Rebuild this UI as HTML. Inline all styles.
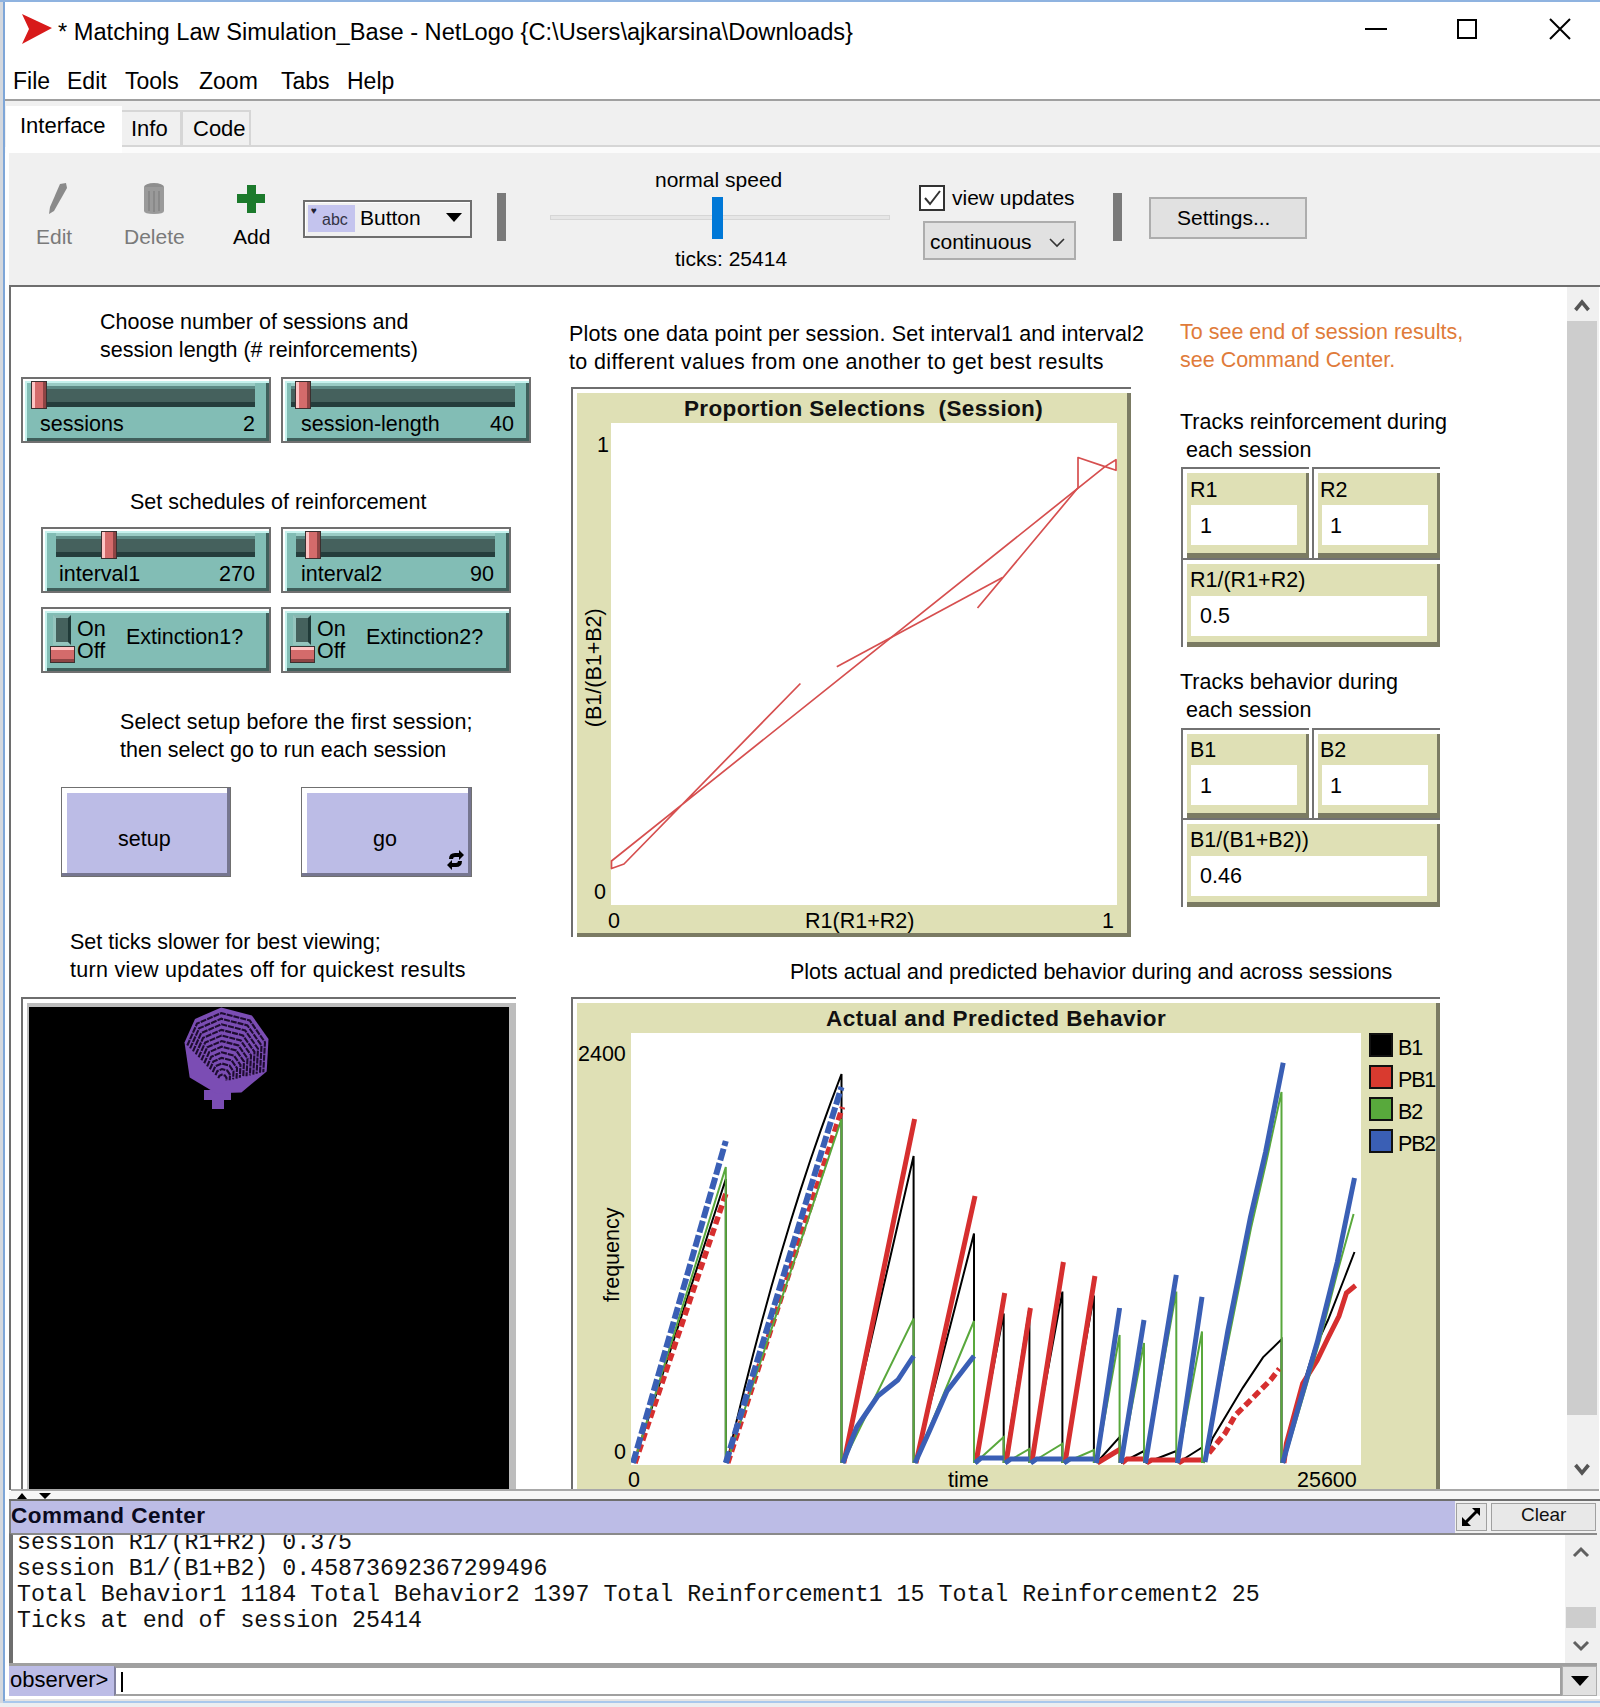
<!DOCTYPE html>
<html><head><meta charset="utf-8">
<style>
*{margin:0;padding:0;box-sizing:border-box}
html,body{width:1600px;height:1707px;overflow:hidden;background:#fff;font-family:"Liberation Sans",sans-serif;color:#000}
.a{position:absolute}
.t{position:absolute;white-space:pre;line-height:1}
.w{font-size:21.5px}
.fr{position:absolute;border:2px solid #707070;background:#82bdb5;box-shadow:inset 2px 2px 0 #fff,inset 4px 4px 0 #c6f2ee,inset -3px -3px 0 #3f5f5b}
.trk{position:absolute;height:24px;background:linear-gradient(to bottom,#9accc5 0,#9accc5 3px,#5c8984 3px,#5c8984 6px,#45615d 6px,#45615d 19px,#253d3c 19px)}
.thm{position:absolute;width:16px;height:28px;border:1.5px solid #3a3030;background:linear-gradient(to right,#ffc4c4 0,#ffc4c4 3px,#d46b6b 3px,#d46b6b 11px,#8e4444 11px)}
.btn{position:absolute;background:#bcbce6;border:1.5px solid #707070;box-shadow:inset -3px -3px 0 #767690,inset 5px 5px 0 #fff}
.sw{position:absolute;width:18px;height:30px;background:#45615d;border:3px solid #94c4bd;border-right-color:#203a38;border-top-color:#8ab8b2}
.pf{position:absolute;background:#fff;border-top:2px solid #6e6e6e;border-left:2px solid #6e6e6e}
.pb{position:absolute;background:#dfe0b5;border-right:4px solid #7b7b63;border-bottom:4px solid #7b7b63}
.mo{position:absolute;background:#fff;border-top:2px solid #727272;border-left:2px solid #727272}
.mb{position:absolute;background:#dfe0b5;border-right:3px solid #7b7b63;border-bottom:5px solid #7b7b63}
.mv{position:absolute;background:#fff}
.knob{position:absolute;width:25px;height:17px;border:1.5px solid #3a3030;background:linear-gradient(to bottom,#ffc4c4 0,#ffc4c4 3px,#d46b6b 3px,#d46b6b 12px,#8e4444 12px)}
</style></head><body>
<!-- desktop strip + window border -->
<div class="a" style="left:0;top:0;width:4px;height:1707px;background:#d4d8de"></div>
<div class="a" style="left:3px;top:0;width:2px;height:1707px;background:#7ea6d8"></div>
<div class="a" style="left:0;top:0;width:1600px;height:2px;background:#8fb3e0"></div>
<div class="a" style="left:5px;top:1701px;width:1595px;height:6px;background:#dfe3e8"></div>

<!-- title bar -->
<div id="title" class="a" style="left:5px;top:2px;width:1595px;height:56px;background:#fff"></div>
<svg class="a" style="left:20px;top:12px" width="36" height="34" viewBox="0 0 36 34"><path d="M2 2 L32 16 L2 32 L9 17 Z" fill="#d81a1a"/></svg>
<div class="t" style="left:58px;top:21px;font-size:23.65px">* Matching Law Simulation_Base - NetLogo {C:\Users\ajkarsina\Downloads}</div>
<div class="a" style="left:1365px;top:28px;width:22px;height:2px;background:#000"></div>
<div class="a" style="left:1457px;top:19px;width:20px;height:20px;border:2px solid #000"></div>
<svg class="a" style="left:1549px;top:18px" width="22" height="22"><path d="M1 1 L21 21 M21 1 L1 21" stroke="#000" stroke-width="2"/></svg>

<!-- menu bar -->
<div class="t" style="left:13px;top:70px;font-size:23px;word-spacing:0">File</div>
<div class="t" style="left:67px;top:70px;font-size:23px">Edit</div>
<div class="t" style="left:125px;top:70px;font-size:23px">Tools</div>
<div class="t" style="left:199px;top:70px;font-size:23px">Zoom</div>
<div class="t" style="left:281px;top:70px;font-size:23px">Tabs</div>
<div class="t" style="left:347px;top:70px;font-size:23px">Help</div>
<div class="a" style="left:5px;top:99px;width:1595px;height:2px;background:#a0a0a0"></div>

<!-- tabs row -->
<div class="a" style="left:5px;top:101px;width:1595px;height:52px;background:#f0f0f0"></div>
<div class="a" style="left:6px;top:106px;width:116px;height:47px;background:#fff;border:1px solid #dadada;border-bottom:none"></div>
<div class="a" style="left:122px;top:110px;width:60px;height:36px;background:#f0f0f0;border:2px solid #d6d6d6;border-left:none;border-bottom:none"></div>
<div class="a" style="left:181px;top:110px;width:70px;height:36px;background:#f0f0f0;border:2px solid #d6d6d6;border-bottom:none"></div>
<div class="a" style="left:6px;top:145px;width:1594px;height:2px;background:#d6d6d6"></div>
<div class="a" style="left:5px;top:147px;width:1595px;height:6px;background:#fbfbfb"></div>
<div class="a" style="left:6px;top:106px;width:116px;height:47px;background:#fff"></div>
<div class="t" style="left:20px;top:115px;font-size:22px">Interface</div>
<div class="t" style="left:131px;top:118px;font-size:22px">Info</div>
<div class="t" style="left:193px;top:118px;font-size:22px">Code</div>

<!-- toolbar -->
<div class="a" style="left:9px;top:153px;width:1591px;height:132px;background:#f0f0f0"></div>
<svg class="a" style="left:46px;top:181px" width="24" height="34" viewBox="0 0 24 34"><path d="M14 3 L20 2 L21 7 L8 30 L3 33 L4 26 Z" fill="#8a8a8a"/></svg>
<div class="t" style="left:36px;top:226px;font-size:21px;color:#7a7a7a">Edit</div>
<svg class="a" style="left:141px;top:181px" width="26" height="35" viewBox="0 0 26 35"><ellipse cx="13" cy="6" rx="10" ry="4" fill="#8e8e8e"/><path d="M3 6 L23 6 L23 30 Q23 33 13 33 Q3 33 3 30 Z" fill="#9a9a9a"/><path d="M8 10 V30 M13 10 V31 M18 10 V30" stroke="#848484" stroke-width="1.5"/></svg>
<div class="t" style="left:124px;top:226px;font-size:21px;color:#7a7a7a">Delete</div>
<div class="a" style="left:237px;top:194px;width:28px;height:9px;background:#1c7a2c"></div>
<div class="a" style="left:247px;top:185px;width:9px;height:28px;background:#1c7a2c"></div>
<div class="t" style="left:233px;top:226px;font-size:21px">Add</div>
<!-- widget dropdown -->
<div class="a" style="left:303px;top:200px;width:169px;height:38px;border:2px solid #6e6e6e;border-top-color:#6e6e6e;background:#f0f0f0;box-shadow:inset 1px 1px 0 #fff"></div>
<div class="a" style="left:308px;top:205px;width:47px;height:27px;background:#c4c4ee"></div>
<div class="t" style="left:311px;top:206px;font-size:10px;color:#223">&#9829;</div>
<div class="t" style="left:322px;top:212px;font-size:16px;color:#334">abc</div>
<div class="t" style="left:360px;top:207px;font-size:21px">Button</div>
<svg class="a" style="left:446px;top:213px" width="17" height="10"><path d="M0 0 H16 L8 9 Z" fill="#000"/></svg>
<div class="a" style="left:497px;top:193px;width:9px;height:48px;background:#7a7a7a"></div>
<!-- speed slider -->
<div class="t" style="left:655px;top:169px;font-size:21px">normal speed</div>
<div class="a" style="left:550px;top:215px;width:340px;height:5px;background:#e6e6e6;border:1px solid #d6d6d6"></div>
<div class="a" style="left:712px;top:197px;width:11px;height:42px;background:#0078d7"></div>
<div class="t" style="left:675px;top:248px;font-size:21px">ticks: 25414</div>
<!-- view updates -->
<div class="a" style="left:919px;top:185px;width:26px;height:26px;border:2px solid #333;background:#fff"></div>
<svg class="a" style="left:921px;top:187px" width="22" height="22"><path d="M4 11 L9 17 L19 4" stroke="#333" stroke-width="2" fill="none"/></svg>
<div class="t" style="left:952px;top:187px;font-size:21px">view updates</div>
<div class="a" style="left:923px;top:221px;width:153px;height:39px;background:#e1e1e1;border:2px solid #adadad"></div>
<div class="t" style="left:930px;top:231px;font-size:21px">continuous</div>
<svg class="a" style="left:1049px;top:238px" width="16" height="10"><path d="M1 1 L8 8 L15 1" stroke="#333" stroke-width="1.6" fill="none"/></svg>
<div class="a" style="left:1113px;top:193px;width:9px;height:48px;background:#7a7a7a"></div>
<div class="a" style="left:1149px;top:197px;width:158px;height:42px;background:#e1e1e1;border:2px solid #adadad"></div>
<div class="t" style="left:1177px;top:207px;font-size:21px">Settings...</div>

<!-- interface area -->
<div id="iface" class="a" style="left:9px;top:285px;width:1591px;height:1205px;background:#fff;border-top:2px solid #6e6e6e;border-left:2px solid #6e6e6e"></div>

<!-- LEFT COLUMN -->
<div class="t w" style="left:100px;top:312px">Choose number of sessions and</div>
<div class="t w" style="left:100px;top:340px">session length (# reinforcements)</div>
<div class="fr" style="left:21px;top:377px;width:250px;height:66px"></div>
<div class="trk" style="left:31px;top:383px;width:224px"></div>
<div class="thm" style="left:31px;top:381px"></div>
<div class="t w" style="left:40px;top:414px">sessions</div>
<div class="t w" style="left:243px;top:414px">2</div>
<div class="fr" style="left:281px;top:377px;width:250px;height:66px"></div>
<div class="trk" style="left:291px;top:383px;width:224px"></div>
<div class="thm" style="left:295px;top:381px"></div>
<div class="t w" style="left:301px;top:414px">session-length</div>
<div class="t w" style="left:490px;top:414px">40</div>

<div class="t w" style="left:130px;top:492px">Set schedules of reinforcement</div>
<div class="fr" style="left:41px;top:527px;width:230px;height:66px"></div>
<div class="trk" style="left:56px;top:533px;width:199px"></div>
<div class="thm" style="left:101px;top:531px"></div>
<div class="t w" style="left:59px;top:564px">interval1</div>
<div class="t w" style="left:219px;top:564px">270</div>
<div class="fr" style="left:281px;top:527px;width:230px;height:66px"></div>
<div class="trk" style="left:296px;top:533px;width:199px"></div>
<div class="thm" style="left:305px;top:531px"></div>
<div class="t w" style="left:301px;top:564px">interval2</div>
<div class="t w" style="left:470px;top:564px">90</div>

<div class="fr" style="left:41px;top:607px;width:230px;height:66px"></div>
<div class="sw" style="left:53px;top:615px"></div>
<div class="knob" style="left:50px;top:646px"></div>
<div class="t w" style="left:77px;top:619px">On</div>
<div class="t w" style="left:77px;top:641px">Off</div>
<div class="t w" style="left:126px;top:627px">Extinction1?</div>
<div class="fr" style="left:281px;top:607px;width:230px;height:66px"></div>
<div class="sw" style="left:293px;top:615px"></div>
<div class="knob" style="left:290px;top:646px"></div>
<div class="t w" style="left:317px;top:619px">On</div>
<div class="t w" style="left:317px;top:641px">Off</div>
<div class="t w" style="left:366px;top:627px">Extinction2?</div>

<div class="t w" style="left:120px;top:712px;letter-spacing:0.16px">Select setup before the first session;</div>
<div class="t w" style="left:120px;top:740px">then select go to run each session</div>
<div class="btn" style="left:61px;top:787px;width:170px;height:90px"></div>
<div class="t w" style="left:118px;top:829px">setup</div>
<div class="btn" style="left:301px;top:787px;width:171px;height:90px"></div>
<div class="t w" style="left:373px;top:829px">go</div>
<svg class="a" style="left:446px;top:850px" width="19" height="20" viewBox="0 0 19 20"><path d="M3 9 Q3 3 9 3 L13 3 L13 0 L18 5 L13 10 L13 7 L9 7 Q7 7 7 9 Z M16 11 Q16 17 10 17 L6 17 L6 20 L1 15 L6 10 L6 13 L10 13 Q12 13 12 11 Z" fill="#000"/></svg>

<div class="t w" style="left:70px;top:932px">Set ticks slower for best viewing;</div>
<div class="t w" style="left:70px;top:960px;letter-spacing:0.3px">turn view updates off for quickest results</div>
<!-- view -->
<div class="a" style="left:21px;top:997px;width:495px;height:493px;background:#fff;border-top:2px solid #6e6e6e;border-left:2px solid #6e6e6e"></div>
<div class="a" style="left:27px;top:1003px;width:489px;height:487px;background:#bdbdbd"></div>
<div class="a" style="left:29px;top:1007px;width:480px;height:483px;background:#000"></div>
<svg class="a" style="left:0;top:0" width="600" height="1200"><path d="M204 1090 L231 1090 L231 1100 L224 1100 L224 1109 L212 1109 L212 1100 L204 1100 Z" fill="#7b4db4"/><polygon points="221.2,1007.5 251.9,1015.4 268.5,1039.0 266.7,1071.4 241.4,1092.4 216.0,1093.3 189.7,1077.5 184.5,1042.5 195.0,1018.9" fill="#7b4db4"/><g fill="none" stroke="#1e0c30" stroke-width="2.1" stroke-dasharray="6 1"><polyline points="187.3,1045.5 197.0,1023.6 221.3,1013.1 249.7,1020.4 265.0,1042.2 263.3,1072.2"/><polyline points="190.1,1048.4 199.1,1028.4 221.3,1018.7 247.4,1025.4 261.5,1045.5 260.0,1073.0"/><polyline points="193.0,1051.4 201.1,1033.1 221.4,1024.3 245.2,1030.4 258.0,1048.7 256.6,1073.8"/><polyline points="195.8,1054.4 203.1,1037.9 221.4,1029.9 242.9,1035.4 254.5,1051.9 253.3,1074.6"/><polyline points="198.6,1057.3 205.2,1042.6 221.5,1035.5 240.7,1040.4 251.0,1055.2 249.9,1075.4"/><polyline points="201.4,1060.3 207.2,1047.4 221.6,1041.1 238.4,1045.4 247.5,1058.4 246.5,1076.2"/><polyline points="204.2,1063.3 209.2,1052.1 221.6,1046.7 236.2,1050.5 244.0,1061.6 243.2,1077.0"/><polyline points="207.1,1066.3 211.2,1056.9 221.7,1052.3 233.9,1055.5 240.5,1064.9 239.8,1077.8"/><polyline points="209.9,1069.2 213.3,1061.6 221.7,1057.9 231.7,1060.5 237.0,1068.1 236.5,1078.6"/><polyline points="212.7,1072.2 215.3,1066.3 221.8,1063.5 229.4,1065.5 233.5,1071.3 233.1,1079.4"/><polyline points="215.5,1075.2 217.3,1071.1 221.9,1069.1 227.2,1070.5 230.0,1074.6 229.7,1080.2"/><polyline points="218.3,1078.1 219.4,1075.8 221.9,1074.7 224.9,1075.5 226.5,1077.8 226.4,1081.0"/></g></svg>



<!-- PLOT 1 -->
<div class="t w" style="left:569px;top:324px;letter-spacing:0.14px">Plots one data point per session. Set interval1 and interval2</div>
<div class="t w" style="left:569px;top:352px;letter-spacing:0.36px">to different values from one another to get best results</div>
<div class="pf" style="left:571px;top:387px;width:560px;height:550px"></div>
<div class="pb" style="left:577px;top:393px;width:554px;height:544px"></div>
<div class="a" style="left:611px;top:423px;width:506px;height:482px;background:#fff"></div>
<div class="t" style="left:684px;top:398px;font-size:22.5px;font-weight:bold;color:#111;letter-spacing:0.36px">Proportion Selections  (Session)</div>
<div class="t w" style="left:597px;top:435px">1</div>
<div class="t w" style="left:594px;top:882px">0</div>
<div class="t w" style="left:608px;top:911px">0</div>
<div class="t w" style="left:805px;top:911px">R1(R1+R2)</div>
<div class="t w" style="left:1102px;top:911px">1</div>
<div class="t w" style="left:535px;top:657px;transform:rotate(-90deg)">(B1/(B1+B2)</div>
<svg class="a" style="left:0;top:0" width="1600" height="1000"><g fill="none" stroke="#d64f4f" stroke-width="1.7" stroke-linejoin="round">
<polyline points="800.4,683.5 624,864 611.5,868.5 611.5,861 1105,466.6 1116,459.7 1116,470.3 1105,466.6"/>
<polyline points="977.5,608 1078,487.8 1078,457.5 1105,466.6"/>
<polyline points="836.8,666.8 1002.5,577.5"/>
</g></svg>

<!-- RIGHT TEXTS + MONITORS -->
<div class="t w" style="left:1180px;top:322px;color:#e07b39">To see end of session results,</div>
<div class="t w" style="left:1180px;top:350px;color:#e07b39">see Command Center.</div>
<div class="t w" style="left:1180px;top:412px">Tracks reinforcement during</div>
<div class="t w" style="left:1180px;top:440px"> each session</div>
<div class="mo" style="left:1181px;top:467px;width:128px;height:91px"></div>
<div class="mb" style="left:1187px;top:473px;width:122px;height:85px"></div>
<div class="mv" style="left:1191px;top:505px;width:106px;height:40px"></div>
<div class="t w" style="left:1190px;top:480px">R1</div>
<div class="t w" style="left:1200px;top:516px">1</div>
<div class="mo" style="left:1312px;top:467px;width:128px;height:91px"></div>
<div class="mb" style="left:1318px;top:473px;width:122px;height:85px"></div>
<div class="mv" style="left:1322px;top:505px;width:106px;height:40px"></div>
<div class="t w" style="left:1320px;top:480px">R2</div>
<div class="t w" style="left:1330px;top:516px">1</div>
<div class="mo" style="left:1181px;top:558px;width:259px;height:89px"></div>
<div class="mb" style="left:1187px;top:564px;width:253px;height:83px"></div>
<div class="mv" style="left:1191px;top:596px;width:236px;height:40px"></div>
<div class="t w" style="left:1190px;top:570px">R1/(R1+R2)</div>
<div class="t w" style="left:1200px;top:606px">0.5</div>

<div class="t w" style="left:1180px;top:672px">Tracks behavior during</div>
<div class="t w" style="left:1180px;top:700px"> each session</div>
<div class="mo" style="left:1181px;top:728px;width:128px;height:90px"></div>
<div class="mb" style="left:1187px;top:734px;width:122px;height:84px"></div>
<div class="mv" style="left:1191px;top:765px;width:106px;height:40px"></div>
<div class="t w" style="left:1190px;top:740px">B1</div>
<div class="t w" style="left:1200px;top:776px">1</div>
<div class="mo" style="left:1312px;top:728px;width:128px;height:90px"></div>
<div class="mb" style="left:1318px;top:734px;width:122px;height:84px"></div>
<div class="mv" style="left:1322px;top:765px;width:106px;height:40px"></div>
<div class="t w" style="left:1320px;top:740px">B2</div>
<div class="t w" style="left:1330px;top:776px">1</div>
<div class="mo" style="left:1181px;top:818px;width:259px;height:89px"></div>
<div class="mb" style="left:1187px;top:824px;width:253px;height:83px"></div>
<div class="mv" style="left:1191px;top:856px;width:236px;height:40px"></div>
<div class="t w" style="left:1190px;top:830px">B1/(B1+B2))</div>
<div class="t w" style="left:1200px;top:866px">0.46</div>

<!-- PLOT 2 -->
<div class="t w" style="left:790px;top:962px">Plots actual and predicted behavior during and across sessions</div>
<div class="pf" style="left:571px;top:997px;width:869px;height:493px"></div>
<div class="pb" style="left:577px;top:1003px;width:863px;height:487px;border-bottom:none"></div>
<div class="a" style="left:631px;top:1033px;width:730px;height:432px;background:#fff"></div>
<div class="t" style="left:826px;top:1008px;font-size:22.5px;font-weight:bold;color:#111;letter-spacing:0.48px">Actual and Predicted Behavior</div>
<div class="t w" style="left:578px;top:1044px">2400</div>
<div class="t w" style="left:614px;top:1442px">0</div>
<div class="t w" style="left:628px;top:1470px">0</div>
<div class="t w" style="left:948px;top:1470px">time</div>
<div class="t w" style="left:1297px;top:1470px">25600</div>
<div class="t w" style="left:566px;top:1244px;transform:rotate(-90deg)">frequency</div>
<div class="a" style="left:1369px;top:1033px;width:24px;height:24px;background:#000;border:2px solid #111"></div>
<div class="a" style="left:1369px;top:1065px;width:24px;height:24px;background:#d93a2f;border:2px solid #111"></div>
<div class="a" style="left:1369px;top:1097px;width:24px;height:24px;background:#58a93c;border:2px solid #111"></div>
<div class="a" style="left:1369px;top:1129px;width:24px;height:24px;background:#3a5fb5;border:2px solid #111"></div>
<div class="t w" style="left:1398px;top:1038px;letter-spacing:-1.2px">B1</div>
<div class="t w" style="left:1398px;top:1070px;letter-spacing:-1.2px">PB1</div>
<div class="t w" style="left:1398px;top:1102px;letter-spacing:-1.2px">B2</div>
<div class="t w" style="left:1398px;top:1134px;letter-spacing:-1.2px">PB2</div>
<svg class="a" style="left:0;top:0" width="1600" height="1500"><defs><clipPath id="cp"><rect x="631" y="1033" width="730" height="432"/></clipPath></defs><g clip-path="url(#cp)" fill="none" stroke-linejoin="miter">
<path d="M634 1463 L725.8 1179 L725.8 1463 M726.8 1463 L735.4 1425.9 L744.2 1389.7 L753.2 1354.3 L762.3 1319.8 L771.6 1286.1 L781.1 1253.2 L790.7 1221.3 L800.5 1190.1 L810.5 1159.8 L820.7 1130.4 L831 1101.8 L841.5 1074 L841.5 1463 M842.8 1463 L913.6 1156 L913.6 1463 M915 1463 L974 1233.6 L974 1463 M975 1463 L1003.7 1313.5 L1003.7 1463 M1005 1463 L1029.4 1308 L1029.4 1463 M1030.7 1463 L1062.4 1291.6 L1062.4 1463 M1064 1463 L1093.9 1295.5 L1093.9 1463 M1096.4 1463 L1119.6 1437 L1119.6 1463 M1121 1463 L1144 1451 L1144 1463 M1145.5 1463 L1176.3 1451 L1176.3 1463 M1177.5 1463 L1202 1447.5 L1202 1463 M1203.4 1463 L1212.7 1438 L1227.8 1412.8 L1242.9 1387.6 L1263 1357.4 L1281.5 1339.3 L1281.5 1463 M1284 1463 L1290 1427 L1313.6 1351 L1328 1320 L1344.5 1278 L1354.5 1252" stroke="#000" stroke-width="2"/>
<path d="M843.8 1463 L914.6 1119 M916 1463 L975 1196 M976 1463 L1004.7 1293 M1006 1463 L1030.4 1308 M1031.7 1463 L1063.4 1262 M1065 1463 L1094.9 1276 M1097.4 1463 L1120.6 1449 M1122 1463 L1127 1459 L1144 1459 M1146.5 1463 L1151.5 1460 L1176.3 1460 M1178.5 1463 L1183.5 1460 L1202 1460 M1284 1463 L1286.4 1443.6 L1302.7 1383.6 L1317.3 1360 L1328 1338 L1339 1316 L1346.4 1293 L1355.5 1285.5" stroke="#d62f2f" stroke-width="5"/>
<path d="M635 1463 L726.8 1191 M727.8 1463 L842.5 1107 M1208.9 1453 L1225.3 1433 L1235.3 1415.3 L1248 1402.7 L1258 1392.6 L1270.6 1380 L1279.4 1368.7" stroke="#d62f2f" stroke-width="5.5" stroke-dasharray="8 4"/>
<path d="M634 1463 L725.8 1167 L725.8 1463 M726.8 1463 L841.5 1119 L841.5 1463 M842.8 1463 L913.6 1318.6 L913.6 1463 M915 1463 L974 1321 L974 1463 M975 1463 L1003.7 1437 L1003.7 1463 M1005 1463 L1029.4 1449 L1029.4 1463 M1030.7 1463 L1062.4 1443.7 L1062.4 1463 M1064 1463 L1093.9 1450 L1093.9 1463 M1096.4 1463 L1119.6 1335 L1119.6 1463 M1121 1463 L1144 1343 L1144 1463 M1145.5 1463 L1176.3 1291.6 L1176.3 1463 M1177.5 1463 L1202 1331.5 L1202 1463 M1203.4 1463 L1228.5 1340 L1251 1228 L1266 1163 L1281.5 1091.9 L1281.5 1463 M1283.6 1463 L1299 1411 L1320 1340 L1338 1270 L1353.6 1214" stroke="#59a83c" stroke-width="2"/>
<path d="M842.8 1463 L856.8 1427 L877.8 1396 L897.8 1380 L913.6 1356 M915 1463 L929 1432 L947 1391 L974 1356 M975 1463 L981 1458 L1003.7 1458 M1005 1463 L1011 1459 L1029.4 1459 M1030.7 1463 L1036.7 1459 L1062.4 1459 M1064 1463 L1070 1459 L1093.9 1459 M1096.4 1463 L1119.6 1308 M1121 1463 L1144 1320 M1145.5 1463 L1176.3 1274.8 M1177.5 1463 L1202 1296.8 M1205 1462 L1227.8 1331 L1250.5 1217 L1265.6 1152 L1283.2 1062.7 M1282.7 1463 L1297.3 1411 L1317.3 1342 L1337.3 1262 L1354.5 1178" stroke="#3a5fb5" stroke-width="5"/>
<path d="M633 1463 L725.8 1141 M725.8 1463 L841.5 1087" stroke="#3a5fb5" stroke-width="6" stroke-dasharray="12 3"/>
</g></svg>

<!-- interface bottom + splitter -->
<div class="a" style="left:11px;top:1489px;width:1588px;height:2px;background:#a8a8a8"></div>
<div class="a" style="left:9px;top:1491px;width:1591px;height:8px;background:#f6f6f6"></div>
<svg class="a" style="left:16px;top:1492px" width="40" height="8"><path d="M1 7 L6 1 L11 7 Z M23 1 L35 1 L29 7 Z" fill="#000"/></svg>
<div class="a" style="left:9px;top:1499px;width:1591px;height:2px;background:#6e6e6e"></div>

<!-- scrollbar -->
<div class="a" style="left:1567px;top:287px;width:32px;height:1202px;background:#f0f0f0"></div>
<div class="a" style="left:1567px;top:321px;width:30px;height:1094px;background:#cdcdcd"></div>
<svg class="a" style="left:1573px;top:297px" width="18" height="16"><path d="M2.5 13 L9 5 L15.5 13" stroke="#555" stroke-width="3.6" fill="none"/></svg>
<svg class="a" style="left:1573px;top:1462px" width="18" height="16"><path d="M2.5 3 L9 11 L15.5 3" stroke="#555" stroke-width="3.6" fill="none"/></svg>

<!-- command center -->
<div class="a" style="left:9px;top:1501px;width:1591px;height:200px;background:#f0f0f0"></div>
<div class="a" style="left:9px;top:1501px;width:1446px;height:32px;background:#bcbce6;border-left:2px solid #808080"></div>
<div class="t" style="left:11px;top:1505px;font-size:22.5px;font-weight:bold;color:#0a0a20;letter-spacing:0.5px">Command Center</div>
<div class="a" style="left:1456px;top:1503px;width:31px;height:28px;background:#e8e8e8;border:1px solid #a0a0a0"></div>
<svg class="a" style="left:1461px;top:1507px" width="21" height="20"><path d="M2 18 L18 2" stroke="#000" stroke-width="3"/><path d="M11 1 L19 1 L19 9 Z M1 10 L1 19 L10 19 Z" fill="#000"/></svg>
<div class="a" style="left:1491px;top:1503px;width:105px;height:28px;background:#e8e8e8;border:1px solid #a0a0a0"></div>
<div class="t" style="left:1521px;top:1505px;font-size:19px;color:#111">Clear</div>
<div class="a" style="left:9px;top:1533px;width:1588px;height:130px;background:#fff;border-left:4px solid #6e6e6e;border-top:2px solid #8a8a8a"></div>
<div class="a" style="left:13px;top:1535px;width:1550px;height:128px;overflow:hidden">
<div class="t" style="left:4px;top:-5.5px;font-family:'Liberation Mono',monospace;font-size:23.27px;line-height:26px;color:#111">session R1/(R1+R2) 0.375
session B1/(B1+B2) 0.45873692367299496
Total Behavior1 1184 Total Behavior2 1397 Total Reinforcement1 15 Total Reinforcement2 25
Ticks at end of session 25414</div>
</div>
<div class="a" style="left:1565px;top:1535px;width:32px;height:128px;background:#f0f0f0"></div>
<div class="a" style="left:1566px;top:1607px;width:30px;height:21px;background:#cdcdcd"></div>
<svg class="a" style="left:1572px;top:1546px" width="18" height="12"><path d="M2 10 L9 3 L16 10" stroke="#606060" stroke-width="3" fill="none"/></svg>
<svg class="a" style="left:1572px;top:1640px" width="18" height="12"><path d="M2 2 L9 9 L16 2" stroke="#606060" stroke-width="3" fill="none"/></svg>
<div class="a" style="left:9px;top:1663px;width:1588px;height:3px;background:#a0a0a0"></div>
<div class="a" style="left:9px;top:1666px;width:105px;height:30px;background:#bcbce6"></div>
<div class="t" style="left:10px;top:1669px;font-size:22px">observer&gt;</div>
<div class="a" style="left:114px;top:1666px;width:1448px;height:30px;background:#fff;border:2px solid #a0a0a0;border-left:2px solid #8080a0"></div>
<div class="a" style="left:121px;top:1672px;width:2px;height:20px;background:#000"></div>
<div class="a" style="left:1562px;top:1666px;width:35px;height:30px;background:#e1e1e1;border:1px solid #adadad"></div>
<svg class="a" style="left:1570px;top:1675px" width="20" height="12"><path d="M1 1 H19 L10 11 Z" fill="#000"/></svg>
<div class="a" style="left:5px;top:1696px;width:1595px;height:5px;background:#fff"></div>
<div class="a" style="left:5px;top:1699px;width:1595px;height:2px;background:#e4e4e4"></div>
<div class="a" style="left:3px;top:1701px;width:1597px;height:2px;background:#a9c8ec"></div>
<div class="a" style="left:0;top:1703px;width:1600px;height:4px;background:#eceef0"></div>
</body></html>
